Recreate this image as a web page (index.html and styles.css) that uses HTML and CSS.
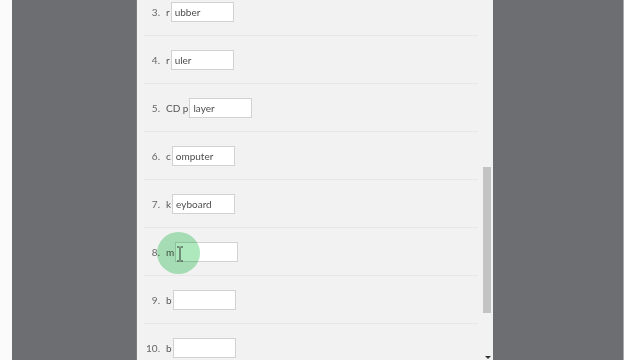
FILE: index.html
```html
<!DOCTYPE html>
<html>
<head>
<meta charset="utf-8">
<link rel="stylesheet" href="styles.css">
</head>
<body>
<div class="screen">
  <div class="edge-left"></div>
  <div class="side side-left"></div>
  <div class="panel">
    <ol class="list">
      <li class="row"><span class="num">3.</span><span class="pre">r</span><span class="field">ubber</span></li>
      <li class="row"><span class="num">4.</span><span class="pre">r</span><span class="field">uler</span></li>
      <li class="row"><span class="num">5.</span><span class="pre">CD p</span><span class="field">layer</span></li>
      <li class="row"><span class="num">6.</span><span class="pre">c</span><span class="field">omputer</span></li>
      <li class="row"><span class="num">7.</span><span class="pre">k</span><span class="field">eyboard</span></li>
      <li class="row"><span class="num">8.</span><span class="pre">m</span><span class="field"></span></li>
      <li class="row"><span class="num">9.</span><span class="pre">b</span><span class="field"></span></li>
      <li class="row"><span class="num">10.</span><span class="pre">b</span><span class="field"></span></li>
    </ol>
    <div class="scrollbar">
      <div class="thumb"></div>
      <div class="arrow"></div>
    </div>
  </div>
  <div class="side side-right"></div>
  <div class="edge-line"></div>
  <div class="edge-right"></div>
  <div class="click-ring"></div>
  <svg class="ibeam" width="8" height="16" viewBox="0 0 8 16">
    <path d="M1 1h2.5M4.5 1H7M4 1.5v13M1 15h2.5M4.5 15H7" stroke="#333" stroke-width="1" fill="none"/>
  </svg>
</div>
</body>
</html>
```

FILE: styles.css
```css
html, body {
  margin: 0;
  padding: 0;
  width: 640px;
  height: 360px;
  overflow: hidden;
  background: #ffffff;
}
.screen {
  position: relative;
  display: flex;
  width: 640px;
  height: 360px;
  font-family: Lato, "Open Sans", sans-serif;
}
.edge-left {
  width: 12px;
  background: #fbfbfb;
}
.side {
  background: #6d6e72;
}
.side-left {
  width: 124px;
  border-right: 1px solid #7c7d81;
}
.side-right {
  width: 130px;
}
.edge-line {
  width: 1px;
  background: #a9aaad;
}
.edge-right {
  flex: 1;
  background: #ffffff;
}
.panel {
  width: 356px;
  background: #f2f2f2;
  display: flex;
  overflow: hidden;
}
.list {
  list-style: none;
  margin: -12px 5px 0 7px;
  padding: 0;
  flex: 1;
}
.row {
  height: 47px;
  border-bottom: 1px solid #e7e7e7;
  display: flex;
  align-items: center;
  font-size: 10px;
  color: #555555;
}
.num {
  width: 16px;
  text-align: right;
  color: #666666;
  margin-right: 6px;
}
.pre {
  margin-right: 1px;
}
.field {
  box-sizing: border-box;
  width: 63px;
  height: 20px;
  background: #ffffff;
  border: 1px solid #d2d2d2;
  padding: 0 3px;
  line-height: 18px;
  color: #4e4e4e;
}
.scrollbar {
  width: 10px;
  position: relative;
}
.thumb {
  margin-top: 167px;
  width: 8px;
  height: 146px;
  background: #c3c3c3;
}
.arrow {
  position: absolute;
  left: 2px;
  bottom: 1px;
  width: 0;
  height: 0;
  border-left: 3px solid transparent;
  border-right: 3px solid transparent;
  border-top: 3px solid #333;
}
.click-ring {
  position: absolute;
  left: 157px;
  top: 232px;
  width: 43px;
  height: 42px;
  border-radius: 50%;
  background: #aee8bd;
  mix-blend-mode: multiply;
}
.ibeam {
  position: absolute;
  left: 176px;
  top: 246px;
}
```
